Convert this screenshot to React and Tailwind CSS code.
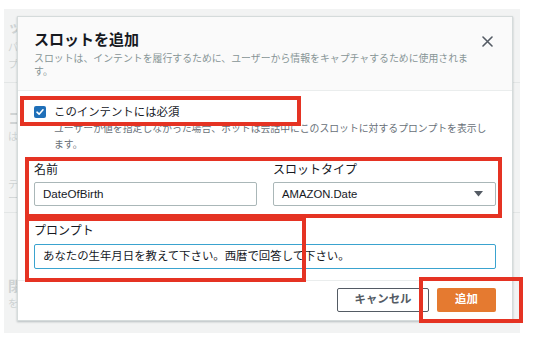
import React from "react";

const FONT = "font-['Liberation_Sans','Noto_Sans_CJK_JP',sans-serif]";

function Checkbox() {
  return (
    <span className="flex h-[12px] w-[12px] shrink-0 items-center justify-center rounded-[2px] bg-[#1f6fb8]">
      <svg width="10" height="10" viewBox="0 0 10 10" fill="none">
        <path d="M2 5.2 L4.1 7.2 L8 2.8" stroke="#fff" strokeWidth="1.6" strokeLinecap="round" strokeLinejoin="round" />
      </svg>
    </span>
  );
}

export default function App() {
  return (
    <div className={`relative h-[350px] w-[534px] overflow-hidden bg-white text-[#16191f] ${FONT}`}>
      {/* underlying page (backdrop) */}
      <div className="ml-[4px] mt-[9px] flex h-[324px] w-[516px] flex-col bg-[#f2f3f3] text-[#cfd3d4]">
        <div className="ml-[4px] mt-[10px] text-[14px] font-bold leading-[16px]">ッ</div>
        <div className="ml-[4px] mt-[4px] text-[10px] leading-[17px]">パイ</div>
        <div className="ml-[4px] text-[10px] leading-[17px]">プロ</div>
        <div className="mt-[9px] h-px w-full bg-[#e3e6e6]" />
        <div className="ml-[4px] mt-[27px] text-[15px] font-bold leading-[18px]">コ</div>
        <div className="ml-[4px] mt-[2px] text-[10px] leading-[14px]">は、</div>
        <div className="ml-[4px] mt-[34px] text-[10px] leading-[14px]">テン</div>
        <div className="ml-[4px] text-[10px] leading-[14px]">ー</div>
        <div className="mt-[6px] h-px w-full bg-[#e3e6e6]" />
        <div className="ml-[4px] mt-[64px] text-[14px] font-bold leading-[18px]">閉</div>
        <div className="ml-[4px] mt-[2px] text-[10px] leading-[14px]">を</div>
      </div>

      {/* modal */}
      <div className="absolute left-[17px] top-[16px] w-[496px] border border-[#d5dbdb] bg-white shadow-[0_1px_2px_rgba(0,28,36,0.25)]">
        <div className="flex border-b border-[#eaeded] bg-[#fafafa] pl-[16px] pr-[19px] pb-[12px] pt-[13px]">
          <div className="flex-1">
            <div className="text-[15px] font-bold leading-[20px] text-[#16191f]">スロットを追加</div>
            <div className="mt-[2px] whitespace-nowrap text-[9.9px] leading-[13px] text-[#879596]">
              スロットは、インテントを履行するために、ユーザーから情報をキャプチャするために使用されま
              <br />
              す。
            </div>
          </div>
          <svg className="mt-[6px]" width="11" height="11" viewBox="0 0 11 11" fill="none">
            <path d="M1 1 L10 10 M10 1 L1 10" stroke="#545b64" strokeWidth="1.6" strokeLinecap="round" />
          </svg>
        </div>

        <div className="px-[16px] pb-[11px] pt-[13px]">
          <div className="flex h-[16px] items-center gap-[8px]">
            <Checkbox />
            <span className="text-[11.4px] leading-[16px] text-[#16191f]">このインテントには必須</span>
          </div>
          <div className="ml-[20px] mt-[1px] whitespace-nowrap text-[9.85px] leading-[16px] text-[#687078]">
            ユーザーが値を指定しなかった場合、ボットは会話中にこのスロットに対するプロンプトを表示し
            <br />
            ます。
          </div>

          <div className="mt-[9px] grid grid-cols-2 gap-[16px]">
            <div>
              <div className="text-[12px] leading-[16px] text-[#16191f]">名前</div>
              <div className="mt-[4px] flex h-[24px] items-center rounded-[2px] border border-[#aab7b8] bg-white px-[8px] text-[11.6px] text-[#16191f]">
                DateOfBirth
              </div>
            </div>
            <div>
              <div className="text-[12px] leading-[16px] text-[#16191f]">スロットタイプ</div>
              <div className="mt-[4px] flex h-[24px] items-center justify-between rounded-[2px] border border-[#aab7b8] bg-white pl-[8px] pr-[12px] text-[11.3px] text-[#16191f]">
                <span>AMAZON.Date</span>
                <svg width="9" height="6" viewBox="0 0 9 6">
                  <path d="M0 0 H9 L4.5 5.5 Z" fill="#545b64" />
                </svg>
              </div>
            </div>
          </div>

          <div className="mt-[17px] text-[12px] leading-[16px] text-[#16191f]">プロンプト</div>
          <div className="mt-[5px] flex h-[25px] items-center rounded-[2px] border-[1.5px] border-[#3aa3cf] bg-white px-[8px] text-[11.4px] text-[#16191f]">
            あなたの生年月日を教えて下さい。西暦で回答して下さい。
          </div>
        </div>

        <div className="flex justify-end gap-[8px] border-t border-[#eaeded] px-[16px] pb-[8px] pt-[7px]">
          <button className="flex h-[24px] w-[92px] items-center justify-center rounded-[2px] border border-[#545b64] bg-white text-[11.4px] font-bold text-[#545b64]">
            キャンセル
          </button>
          <button className="flex h-[24px] w-[59px] items-center justify-center rounded-[2px] bg-[#e57a30] text-[11.4px] font-bold text-white">
            追加
          </button>
        </div>
      </div>

      {/* red annotation boxes */}
      <div className="absolute left-[20px] top-[96px] h-[30px] w-[281px] border-[4px] border-[#e53323]" />
      <div className="absolute left-[25px] top-[157px] h-[61px] w-[477px] border-[4px] border-[#e53323]" />
      <div className="absolute left-[25px] top-[217px] h-[65px] w-[281px] border-[4px] border-[#e53323]" />
      <div className="absolute left-[419px] top-[277px] h-[46px] w-[104px] border-[4px] border-[#e53323]" />
    </div>
  );
}
